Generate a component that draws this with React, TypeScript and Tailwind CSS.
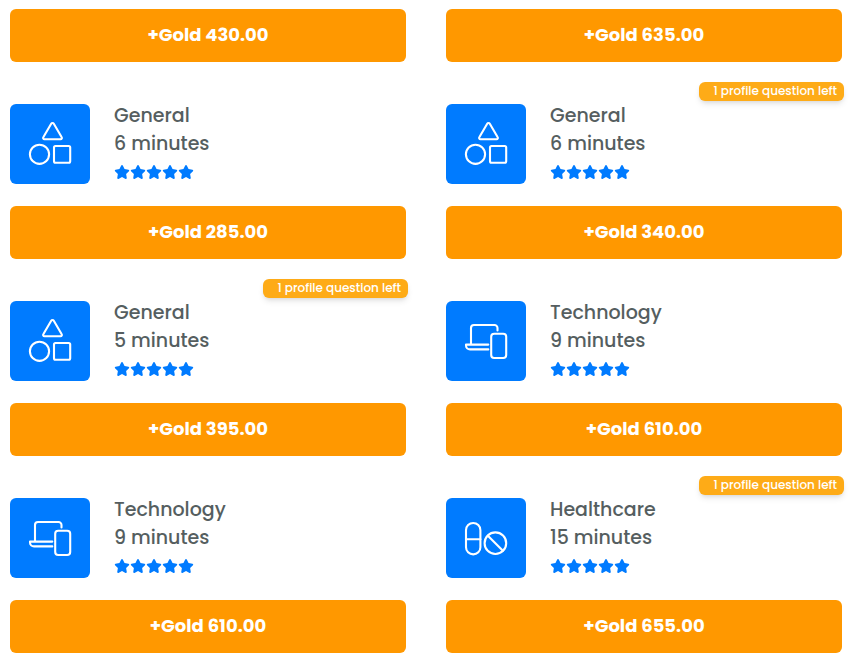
import React from "react";
import { FaStar } from "react-icons/fa6";

type Category = "General" | "Technology" | "Healthcare";

type Survey = {
  category: Category;
  minutes: number;
  reward: string;
  questionsLeft?: number;
};

const previousRewards = ["430.00", "635.00"];

const surveys: Survey[] = [
  { category: "General", minutes: 6, reward: "285.00" },
  { category: "General", minutes: 6, reward: "340.00", questionsLeft: 1 },
  { category: "General", minutes: 5, reward: "395.00", questionsLeft: 1 },
  { category: "Technology", minutes: 9, reward: "610.00" },
  { category: "Technology", minutes: 9, reward: "610.00" },
  { category: "Healthcare", minutes: 15, reward: "655.00", questionsLeft: 1 },
];

const icons: Record<Category, React.ReactNode> = {
  General: (
    <>
      <path d="M41.2 19.8 33.3 33.2a1.3 1.3 0 0 0 1.1 2h16.2a1.3 1.3 0 0 0 1.1-2L43.8 19.8a1.5 1.5 0 0 0-2.6 0Z" />
      <circle cx="29.5" cy="50.3" r="9.6" />
      <rect x="44" y="42" width="16.2" height="16.8" rx="1.5" />
    </>
  ),
  Technology: (
    <>
      <path d="M25 43V27a3 3 0 0 1 3-3h20.5a3 3 0 0 1 3 3v2.5" />
      <path d="M42.3 43.6H20v.8a4 4 0 0 0 4 4h18.3" />
      <rect x="45.2" y="32.8" width="15" height="24.2" rx="3" />
    </>
  ),
  Healthcare: (
    <>
      <rect x="20" y="25" width="14.4" height="31.4" rx="7.2" />
      <path d="M20 41.3h14.4" />
      <circle cx="49.4" cy="45.2" r="10.8" />
      <path d="m41.9 37.7 15 15" />
    </>
  ),
};

const RewardButton = ({ reward }: { reward: string }) => (
  <button
    type="button"
    className="h-[53px] w-full rounded-md bg-[#ff9800] pb-0.5 text-lg font-bold text-white"
  >
    +Gold {reward}
  </button>
);

const SurveyCard = ({ survey }: { survey: Survey }) => (
  <article className="relative pt-10">
    {survey.questionsLeft && (
      <span className="absolute top-5 -right-0.5 flex h-[19px] items-center rounded-md bg-[#feab17] pr-[7px] pb-0.5 pl-3.5 text-xs font-medium text-white shadow-md">
        {survey.questionsLeft} profile question left
      </span>
    )}
    <div className="flex items-start gap-6">
      <svg
        viewBox="0 0 80 80"
        className="mt-0.5 size-20 shrink-0 rounded-md bg-[#007bff]"
        fill="none"
        stroke="white"
        strokeWidth="2.1"
        strokeLinecap="round"
        strokeLinejoin="round"
        aria-hidden="true"
      >
        {icons[survey.category]}
      </svg>
      <div className="text-[19px] leading-7 font-medium text-[#555e60]">
        <h2>{survey.category}</h2>
        <p>{survey.minutes} minutes</p>
        <div className="flex h-7 items-center text-[#007bff]" role="img" aria-label="5 out of 5 stars">
          {[1, 2, 3, 4, 5].map((star) => (
            <FaStar key={star} className="h-3.5 w-4" />
          ))}
        </div>
      </div>
    </div>
    <div className="mt-5">
      <RewardButton reward={survey.reward} />
    </div>
  </article>
);

export default function App() {
  return (
    <main className="grid grid-cols-2 gap-x-10 bg-white pt-[9px] pr-[9px] pb-2 pl-2.5 [font-family:Poppins,Inter,sans-serif]">
      {previousRewards.map((reward) => (
        <RewardButton key={reward} reward={reward} />
      ))}
      {surveys.map((survey, index) => (
        <SurveyCard key={index} survey={survey} />
      ))}
    </main>
  );
}
